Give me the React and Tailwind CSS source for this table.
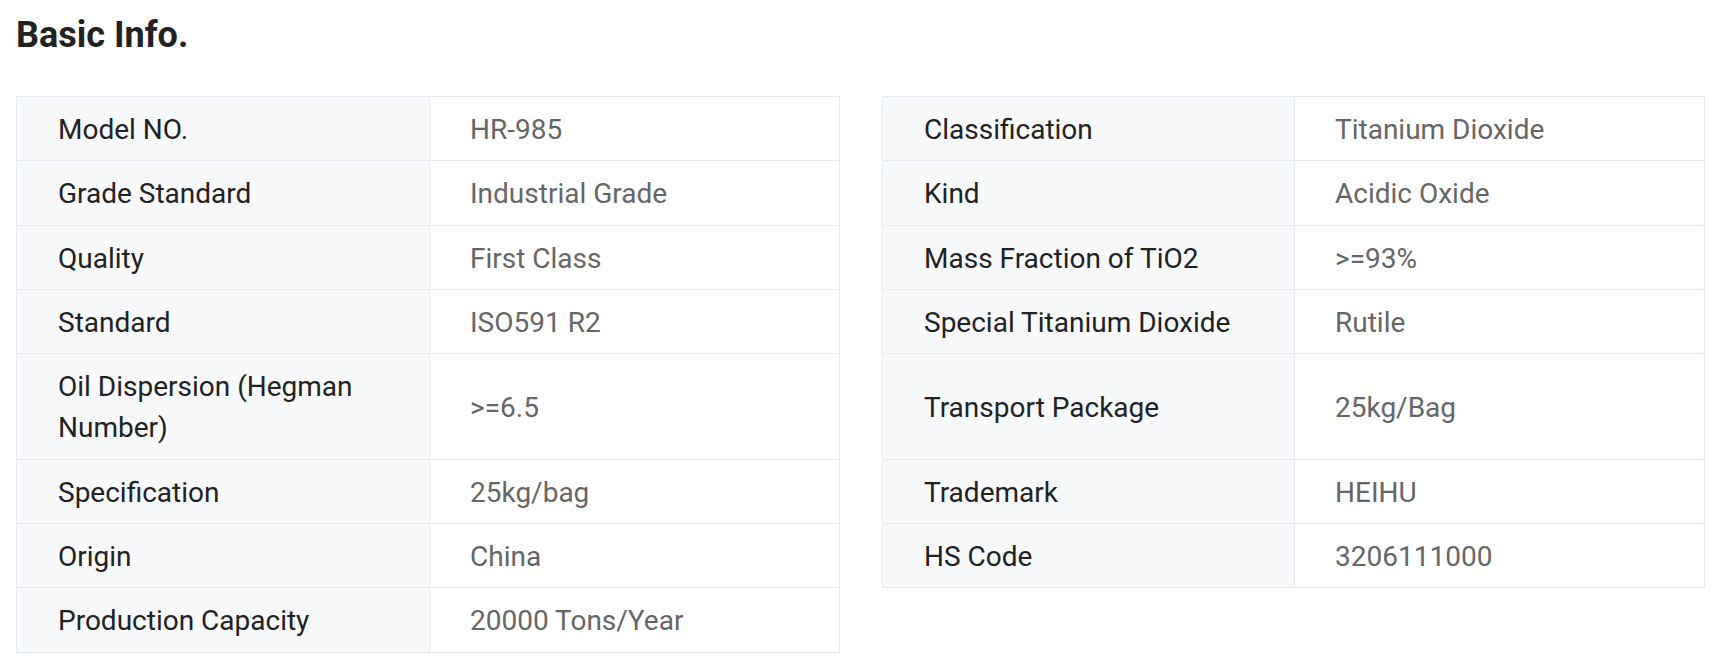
import React from 'react';

const rows = [
  [["Model NO.", "HR-985"], ["Classification", "Titanium Dioxide"]],
  [["Grade Standard", "Industrial Grade"], ["Kind", "Acidic Oxide"]],
  [["Quality", "First Class"], ["Mass Fraction of TiO2", ">=93%"]],
  [["Standard", "ISO591 R2"], ["Special Titanium Dioxide", "Rutile"]],
  [["Oil Dispersion (Hegman Number)", ">=6.5"], ["Transport Package", "25kg/Bag"]],
  [["Specification", "25kg/bag"], ["Trademark", "HEIHU"]],
  [["Origin", "China"], ["HS Code", "3206111000"]],
  [["Production Capacity", "20000 Tons/Year"], null],
];

// one pair of cells (label + value); first row also gets the top border
const Pair = ({ item, first }) => {
  if (!item) {
    return (
      <>
        <div />
        <div />
      </>
    );
  }
  const top = first ? "border-t" : "";
  return (
    <>
      <div className={`flex items-center border-l border-r border-b ${top} border-[#e6ebf1] bg-[#f7f9fb] pl-[41px] pr-4 pt-[12px] pb-[10px] text-[#222222]`}>
        {item[0]}
      </div>
      <div className={`flex items-center border-r border-b ${top} border-[#e6ebf1] bg-white pl-[40px] pr-4 pt-[12px] pb-[10px] text-[#666666]`}>
        {item[1]}
      </div>
    </>
  );
};

const App = () => {
  return (
    <div className="bg-white min-h-screen pl-4 pt-[14px] font-['Roboto',_'Liberation_Sans',_sans-serif]">
      <h2 className="text-[36px] leading-[42px] font-bold text-[#222222]">Basic Info.</h2>

      <div className="mt-10 grid grid-cols-[414px_410px_42px_413px_410px] text-[28px] leading-[41.3px]">
        {rows.map(([left, right], i) => (
          <React.Fragment key={i}>
            <Pair item={left} first={i === 0} />
            <div />
            <Pair item={right} first={i === 0} />
          </React.Fragment>
        ))}
      </div>
    </div>
  );
};

export default App;
